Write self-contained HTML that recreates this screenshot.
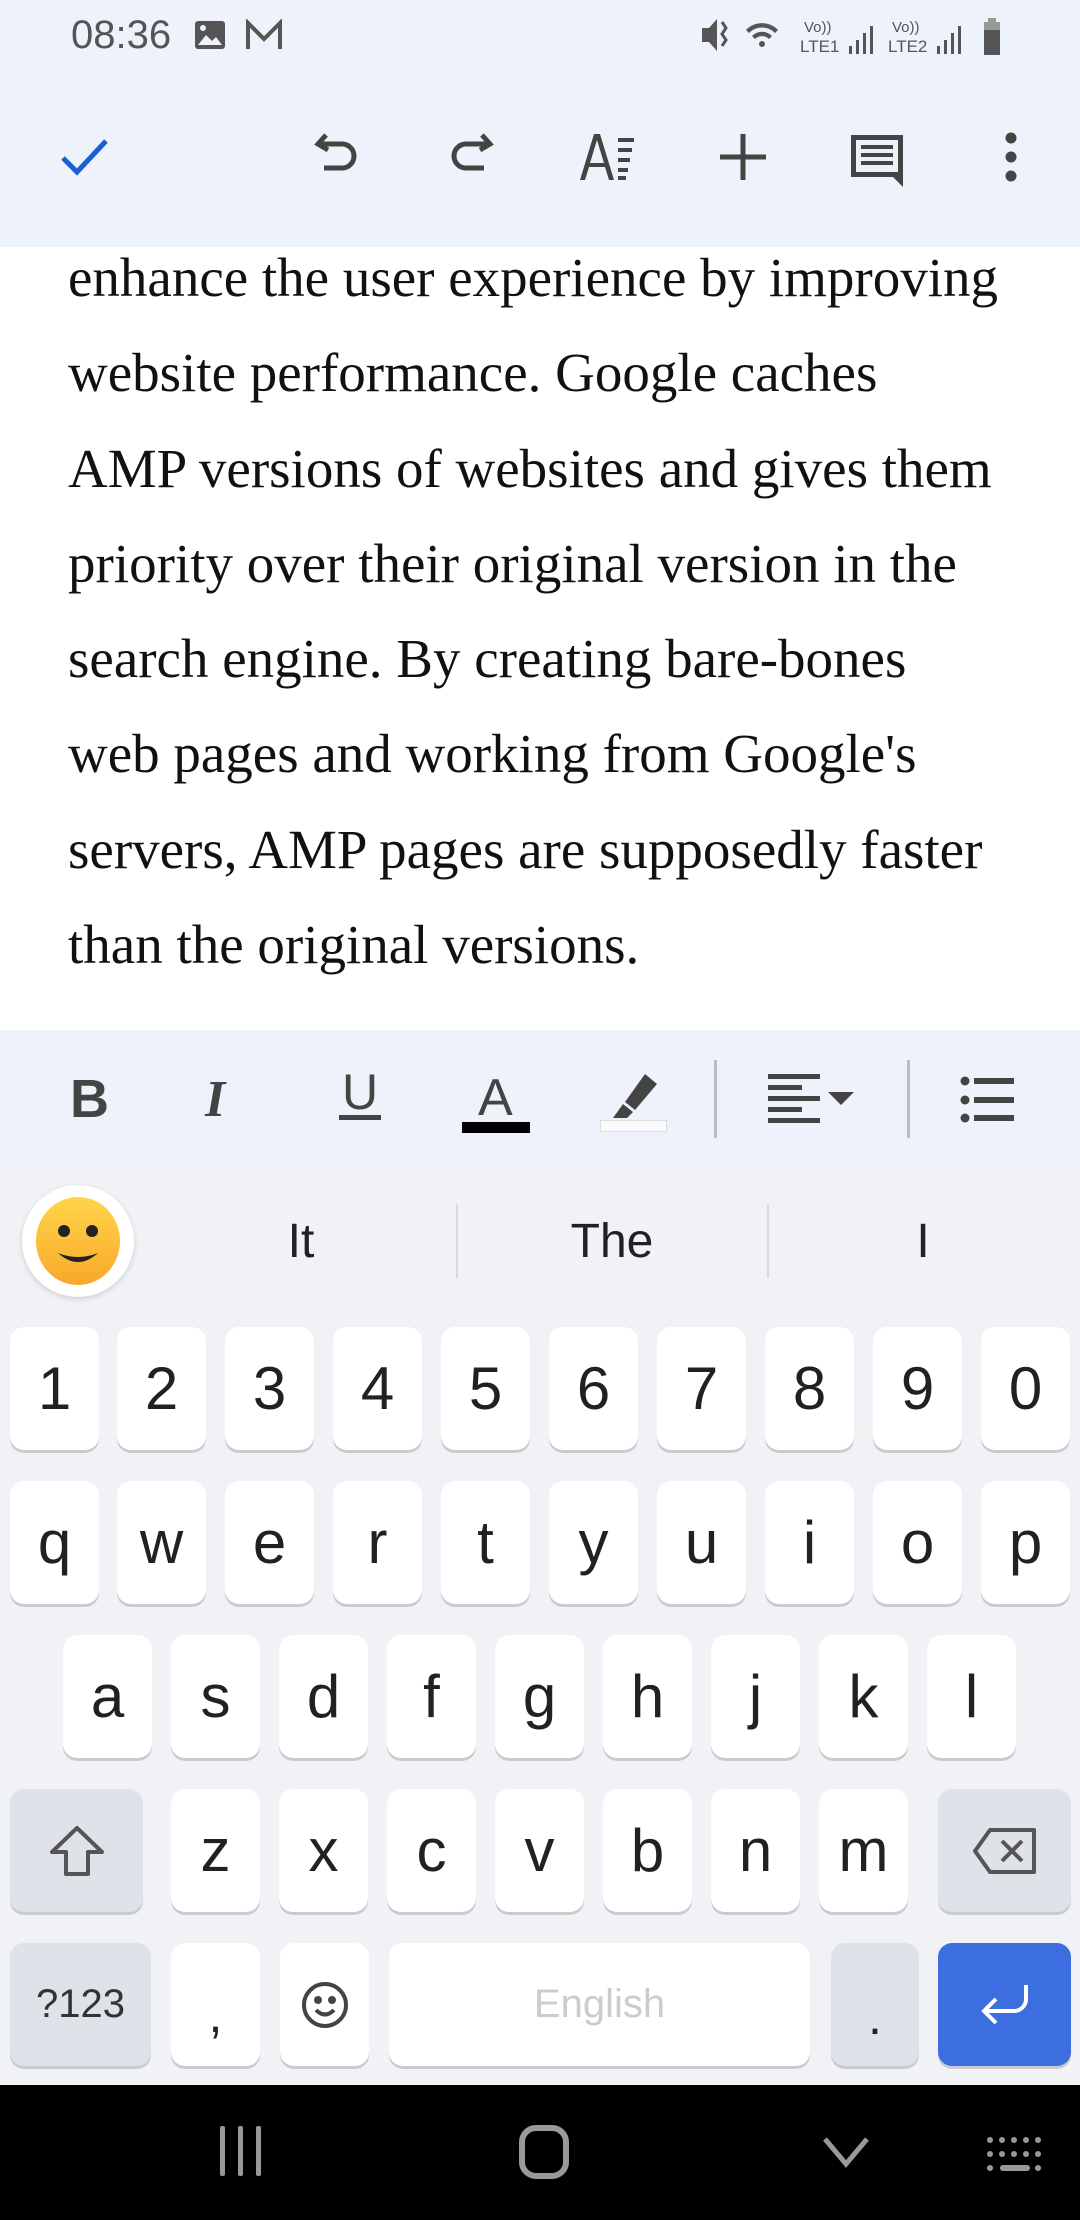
<!DOCTYPE html>
<html><head><meta charset="utf-8">
<style>
*{margin:0;padding:0;box-sizing:border-box}
body{width:1080px;height:2220px;overflow:hidden;background:#f0f2f5;font-family:"Liberation Sans",sans-serif;position:relative}
.abs{position:absolute}
#top{left:0;top:0;width:1080px;height:247px;background:#eef2fa}
#doc{left:0;top:247px;width:1080px;height:783px;background:#fff}
.line{position:absolute;left:68px;font-family:"Liberation Serif",serif;font-size:55px;color:#111;white-space:nowrap;line-height:1}
#fmt{left:0;top:1030px;width:1080px;height:133px;background:#eef2fa}
#kb{left:0;top:1163px;width:1080px;height:922px;background:#f0f2f5}
.key{position:absolute;background:#fff;border-radius:14px;box-shadow:0 3px 0 #c8cbd0;display:flex;align-items:center;justify-content:center;font-size:60px;color:#202124;height:123px}
.sp{background:#dfe2e8}
#nav{left:0;top:2085px;width:1080px;height:135px;background:#000}
.sug{position:absolute;top:1212px;font-size:48px;color:#202124;transform:translateX(-50%)}
</style></head><body>
<div id="top" class="abs"></div>
<div class="abs" style="left:71px;top:13px;font-size:40px;color:#555">08:36</div>
<svg class="abs" style="left:193px;top:19px" width="34" height="32" viewBox="0 0 34 32"><rect x="2" y="2" width="30" height="28" rx="3" fill="#555"/><path d="M5 26 L13 16 L19 22 L23 18 L29 26Z" fill="#eef2fa"/><circle cx="10" cy="9" r="3" fill="#eef2fa"/></svg>
<svg class="abs" style="left:244px;top:19px" width="40" height="32" viewBox="0 0 40 32"><path d="M4 30V4L20 20L36 4V30" fill="none" stroke="#555" stroke-width="4"/></svg>
<svg class="abs" style="left:700px;top:14px" width="330" height="44" viewBox="0 0 330 44">
<g fill="#555"><path d="M2 14h7l8-9v32l-8-9H2z"/><path d="M22 8l4 6-4 6 4 6-4 6" stroke="#555" stroke-width="3" fill="none"/>
<path d="M46 16a22 22 0 0 1 32 0l-3 3a18 18 0 0 0-26 0z"/><path d="M52 22a14 14 0 0 1 20 0l-3 3a10 10 0 0 0-14 0z"/><circle cx="62" cy="30" r="3"/>
<text x="104" y="18" font-size="15" font-family="Liberation Sans">Vo))</text><text x="100" y="38" font-size="17" font-family="Liberation Sans">LTE1</text>
<rect x="149" y="32" width="3" height="8"/><rect x="156" y="26" width="3" height="14"/><rect x="163" y="19" width="3" height="21"/><rect x="170" y="12" width="3" height="28"/>
<text x="192" y="18" font-size="15" font-family="Liberation Sans">Vo))</text><text x="188" y="38" font-size="17" font-family="Liberation Sans">LTE2</text>
<rect x="237" y="32" width="3" height="8"/><rect x="244" y="26" width="3" height="14"/><rect x="251" y="19" width="3" height="21"/><rect x="258" y="12" width="3" height="28"/>
<rect x="288" y="4" width="8" height="4" fill="#999"/><rect x="284" y="8" width="16" height="8" fill="#999"/><rect x="284" y="16" width="16" height="25"/></g></svg>
<svg class="abs" style="left:60px;top:136px" width="50" height="44" viewBox="0 0 50 44"><path d="M3 22L17 36L46 5" fill="none" stroke="#1a5fd4" stroke-width="5"/></svg>
<svg class="abs" style="left:312px;top:132px" width="50" height="50" viewBox="0 0 50 50" fill="none" stroke="#444" stroke-width="5"><path d="M14 3L6 12L16 18"/><path d="M6 12H30a12 12 0 0 1 0 24H12"/></svg>
<svg class="abs" style="left:446px;top:132px" width="50" height="50" viewBox="0 0 50 50" fill="none" stroke="#444" stroke-width="5"><path d="M36 3L44 12L34 18"/><path d="M44 12H20a12 12 0 0 0 0 24H38"/></svg>
<svg class="abs" style="left:578px;top:132px" width="60" height="50" viewBox="0 0 60 50" fill="#444"><path d="M16 2h6l14 46h-5l-4-13H11l-4 13H2zM12 31h14L19 8z"/><rect x="40" y="6" width="16" height="4"/><rect x="40" y="16" width="14" height="4"/><rect x="40" y="26" width="12" height="4"/><rect x="40" y="36" width="10" height="4"/><rect x="40" y="44" width="8" height="4"/></svg>
<svg class="abs" style="left:718px;top:132px" width="50" height="50" viewBox="0 0 50 50"><path d="M25 2v46M2 25h46" stroke="#444" stroke-width="5"/></svg>
<svg class="abs" style="left:848px;top:132px" width="58" height="56" viewBox="0 0 58 56"><path d="M3 3h52v52l-10-10H3z" fill="#444"/><rect x="8" y="8" width="42" height="32" fill="#eef2fa"/><rect x="13" y="13" width="32" height="4" fill="#444"/><rect x="13" y="21" width="32" height="4" fill="#444"/><rect x="13" y="29" width="32" height="4" fill="#444"/></svg>
<svg class="abs" style="left:1000px;top:132px" width="22" height="52" viewBox="0 0 22 52" fill="#444"><circle cx="11" cy="6" r="5.5"/><circle cx="11" cy="25" r="5.5"/><circle cx="11" cy="44" r="5.5"/></svg>
<div id="doc" class="abs"></div>
<div class="line" style="top:250px">enhance the user experience by improving</div>
<div class="line" style="top:345px">website performance. Google caches</div>
<div class="line" style="top:441px">AMP versions of websites and gives them</div>
<div class="line" style="top:536px">priority over their original version in the</div>
<div class="line" style="top:631px">search engine. By creating bare-bones</div>
<div class="line" style="top:726px">web pages and working from Google's</div>
<div class="line" style="top:822px">servers, AMP pages are supposedly faster</div>
<div class="line" style="top:917px">than the original versions.</div>
<div id="fmt" class="abs"></div>
<div class="abs" style="left:70px;top:1068px;font-size:54px;font-weight:bold;color:#444">B</div>
<div class="abs" style="left:205px;top:1070px;font-size:52px;font-weight:bold;font-style:italic;font-family:'Liberation Serif',serif;color:#444">I</div>
<div class="abs" style="left:339px;top:1069px;font-size:50px;color:#444;border-bottom:5px solid #444;line-height:46px;padding:0 3px">U</div>
<div class="abs" style="left:478px;top:1068px;font-size:52px;color:#444">A</div>
<div class="abs" style="left:462px;top:1122px;width:68px;height:11px;background:#000"></div>
<svg class="abs" style="left:605px;top:1070px" width="60" height="52" viewBox="0 0 60 52"><path d="M40 4l12 10-22 26-10-8z" fill="#444"/><path d="M18 34l10 8-6 6H8z" fill="#444"/></svg>
<div class="abs" style="left:600px;top:1120px;width:67px;height:12px;border:1px solid #ddd;background:#fafafa"></div>
<div class="abs" style="left:714px;top:1060px;width:3px;height:78px;background:#bbb"></div>
<svg class="abs" style="left:768px;top:1072px" width="90" height="56" viewBox="0 0 90 56" fill="#444"><rect x="0" y="2" width="52" height="5"/><rect x="0" y="13" width="34" height="5"/><rect x="0" y="24" width="52" height="5"/><rect x="0" y="35" width="34" height="5"/><rect x="0" y="46" width="52" height="5"/><path d="M60 20h26l-13 13z"/></svg>
<div class="abs" style="left:907px;top:1060px;width:3px;height:78px;background:#bbb"></div>
<svg class="abs" style="left:960px;top:1076px" width="56" height="48" viewBox="0 0 56 48" fill="#444"><circle cx="5" cy="5" r="4.5"/><circle cx="5" cy="24" r="4.5"/><circle cx="5" cy="42" r="4.5"/><rect x="14" y="2" width="40" height="6"/><rect x="14" y="21" width="40" height="6"/><rect x="14" y="39" width="40" height="6"/></svg>
<div id="kb" class="abs"></div>
<div class="abs" style="left:22px;top:1185px;width:112px;height:112px;border-radius:50%;background:#fff;box-shadow:0 2px 6px rgba(0,0,0,.15)"></div>
<svg class="abs" style="left:34px;top:1197px" width="88" height="88" viewBox="0 0 88 88"><defs><linearGradient id="g" x1="0" y1="0" x2="0" y2="1"><stop offset="0" stop-color="#ffd54a"/><stop offset="1" stop-color="#f9a82a"/></linearGradient></defs><ellipse cx="44" cy="44" rx="42" ry="44" fill="url(#g)"/><circle cx="30" cy="34" r="6" fill="#222"/><circle cx="58" cy="34" r="6" fill="#222"/><path d="M24 56q20 18 40 0q-20 8-40 0z" fill="#222"/></svg>
<div class="sug" style="left:301px;top:1214px">It</div>
<div class="abs" style="left:456px;top:1204px;width:2px;height:74px;background:#d8dade"></div>
<div class="sug" style="left:612px;top:1214px">The</div>
<div class="abs" style="left:767px;top:1204px;width:2px;height:74px;background:#d8dade"></div>
<div class="sug" style="left:923px;top:1214px">I</div>
<div class="key" style="left:10px;top:1327px;width:89px">1</div>
<div class="key" style="left:117px;top:1327px;width:89px">2</div>
<div class="key" style="left:225px;top:1327px;width:89px">3</div>
<div class="key" style="left:333px;top:1327px;width:89px">4</div>
<div class="key" style="left:441px;top:1327px;width:89px">5</div>
<div class="key" style="left:549px;top:1327px;width:89px">6</div>
<div class="key" style="left:657px;top:1327px;width:89px">7</div>
<div class="key" style="left:765px;top:1327px;width:89px">8</div>
<div class="key" style="left:873px;top:1327px;width:89px">9</div>
<div class="key" style="left:981px;top:1327px;width:89px">0</div>
<div class="key" style="left:10px;top:1481px;width:89px">q</div>
<div class="key" style="left:117px;top:1481px;width:89px">w</div>
<div class="key" style="left:225px;top:1481px;width:89px">e</div>
<div class="key" style="left:333px;top:1481px;width:89px">r</div>
<div class="key" style="left:441px;top:1481px;width:89px">t</div>
<div class="key" style="left:549px;top:1481px;width:89px">y</div>
<div class="key" style="left:657px;top:1481px;width:89px">u</div>
<div class="key" style="left:765px;top:1481px;width:89px">i</div>
<div class="key" style="left:873px;top:1481px;width:89px">o</div>
<div class="key" style="left:981px;top:1481px;width:89px">p</div>
<div class="key" style="left:63px;top:1635px;width:89px">a</div>
<div class="key" style="left:171px;top:1635px;width:89px">s</div>
<div class="key" style="left:279px;top:1635px;width:89px">d</div>
<div class="key" style="left:387px;top:1635px;width:89px">f</div>
<div class="key" style="left:495px;top:1635px;width:89px">g</div>
<div class="key" style="left:603px;top:1635px;width:89px">h</div>
<div class="key" style="left:711px;top:1635px;width:89px">j</div>
<div class="key" style="left:819px;top:1635px;width:89px">k</div>
<div class="key" style="left:927px;top:1635px;width:89px">l</div>
<div class="key sp" style="left:10px;top:1789px;width:133px"><svg width="58" height="54" viewBox="0 0 58 54"><path d="M29 4L4 28h14v22h22V28h14z" fill="none" stroke="#555" stroke-width="4" stroke-linejoin="round"/></svg></div>
<div class="key" style="left:171px;top:1789px;width:89px">z</div>
<div class="key" style="left:279px;top:1789px;width:89px">x</div>
<div class="key" style="left:387px;top:1789px;width:89px">c</div>
<div class="key" style="left:495px;top:1789px;width:89px">v</div>
<div class="key" style="left:603px;top:1789px;width:89px">b</div>
<div class="key" style="left:711px;top:1789px;width:89px">n</div>
<div class="key" style="left:819px;top:1789px;width:89px">m</div>
<div class="key sp" style="left:938px;top:1789px;width:133px"><svg width="66" height="48" viewBox="0 0 66 48"><path d="M18 3h44v42H18L3 24z" fill="none" stroke="#555" stroke-width="4" stroke-linejoin="round"/><path d="M30 14l20 20M50 14L30 34" stroke="#555" stroke-width="4"/></svg></div>
<div class="key sp" style="left:10px;top:1943px;width:141px;font-size:40px;color:#333">?123</div>
<div class="key" style="left:171px;top:1943px;width:89px;font-size:50px;padding-top:20px">,</div>
<div class="key" style="left:280px;top:1943px;width:89px"><svg width="48" height="48" viewBox="0 0 48 48" fill="none" stroke="#444" stroke-width="4"><circle cx="24" cy="24" r="21"/><circle cx="17" cy="19" r="2" fill="#444"/><circle cx="31" cy="19" r="2" fill="#444"/><path d="M15 29q9 9 18 0"/></svg></div>
<div class="key" style="left:389px;top:1943px;width:421px;font-size:40px;color:#ccc">English</div>
<div class="key sp" style="left:831px;top:1943px;width:88px;font-size:50px;padding-top:24px">.</div>
<div class="key" style="left:938px;top:1943px;width:133px;background:#3d6ee0"><svg width="54" height="44" viewBox="0 0 54 44" fill="none" stroke="#fff" stroke-width="4"><path d="M48 2v14a12 12 0 0 1-12 12H6"/><path d="M18 16L6 28l12 12"/></svg></div>
<div id="nav" class="abs"></div>
<svg class="abs" style="left:218px;top:2124px" width="48" height="56" viewBox="0 0 48 56" fill="#999"><rect x="2" y="2" width="5" height="50" rx="2"/><rect x="20" y="2" width="5" height="50" rx="2"/><rect x="38" y="2" width="5" height="50" rx="2"/></svg>
<svg class="abs" style="left:518px;top:2124px" width="52" height="56" viewBox="0 0 52 56"><rect x="4" y="4" width="44" height="48" rx="14" fill="none" stroke="#999" stroke-width="6"/></svg>
<svg class="abs" style="left:822px;top:2136px" width="48" height="32" viewBox="0 0 48 32"><path d="M3 3l21 25L45 3" fill="none" stroke="#999" stroke-width="5"/></svg>
<svg class="abs" style="left:986px;top:2136px" width="60" height="42" viewBox="0 0 60 42" fill="#999"><g><circle cx="4" cy="4" r="3"/><circle cx="16" cy="4" r="3"/><circle cx="28" cy="4" r="3"/><circle cx="40" cy="4" r="3"/><circle cx="52" cy="4" r="3"/><circle cx="4" cy="18" r="3"/><circle cx="16" cy="18" r="3"/><circle cx="28" cy="18" r="3"/><circle cx="40" cy="18" r="3"/><circle cx="52" cy="18" r="3"/><circle cx="4" cy="32" r="3"/><rect x="14" y="29" width="30" height="6" rx="3"/><circle cx="52" cy="32" r="3"/></g></svg>
</body></html>
